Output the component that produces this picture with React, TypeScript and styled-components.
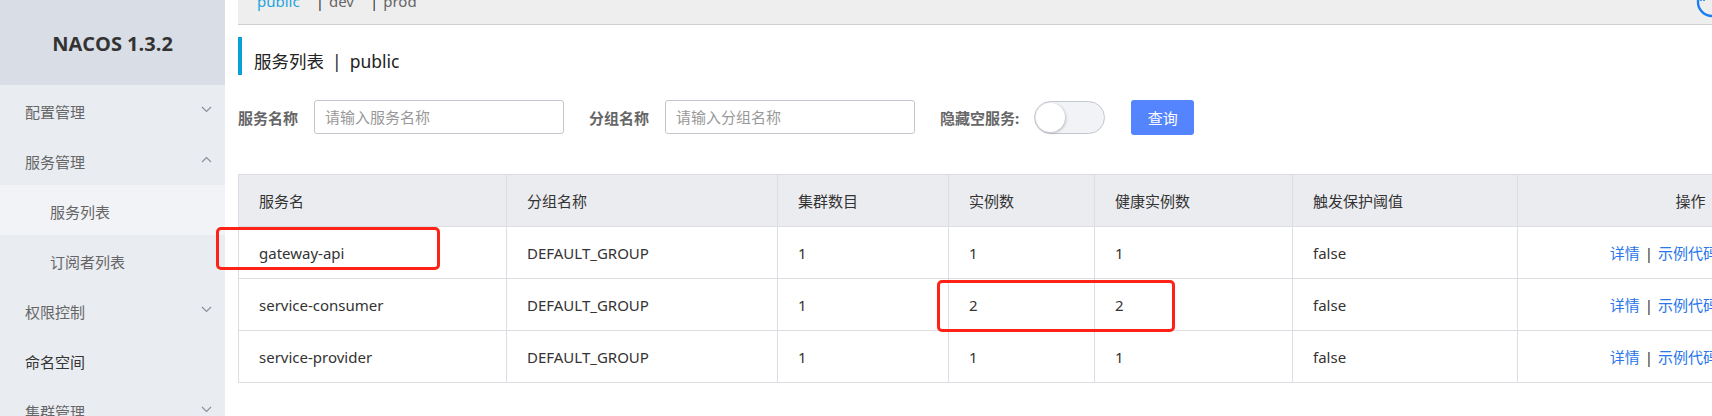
import React from 'react'
import styled, { createGlobalStyle } from 'styled-components'

const FONT = `"Noto Sans", "Noto Sans CJK SC", sans-serif`

const GlobalStyle = createGlobalStyle`
  html, body {
    margin: 0;
    padding: 0;
    background: #fff;
    overflow: hidden;
  }
  body {
    font-family: ${FONT};
    font-size: 15px;
    color: #333;
  }
`

const Page = styled.div`
  position: relative;
  display: flex;
  width: 1712px;
  height: 416px;
  overflow: hidden;
`

// ---- sidebar ----

const Sidebar = styled.aside`
  flex: 0 0 225px;
  background: #e9ecf1;
  display: flex;
  flex-direction: column;
`

const Logo = styled.div`
  height: 85px;
  flex: 0 0 85px;
  background: #d9dde5;
  display: flex;
  align-items: center;
  justify-content: center;
  font-family: "Open Sans", "Noto Sans", sans-serif;
  font-weight: 700;
  font-size: 20px;
  color: #333;
  padding-top: 1px;
  box-sizing: border-box;
`

const MenuItem = styled.div<{ $sub?: boolean; $active?: boolean; $strong?: boolean }>`
  flex: 0 0 50px;
  height: 50px;
  box-sizing: border-box;
  display: flex;
  align-items: center;
  justify-content: space-between;
  padding: 2px 13px 0 ${p => (p.$sub ? '50px' : '25px')};
  background: ${p => (p.$active ? '#f2f3f7' : 'transparent')};
  color: ${p => (p.$strong ? '#333' : '#666')};
  font-size: 15px;
`

const Chevron = ({ up }: { up?: boolean }) => (
  <svg width="11" height="7" viewBox="0 0 11 7" style={{ marginTop: '-4px' }}>
    <path
      d={up ? 'M1 6 L5.5 1.5 L10 6' : 'M1 1 L5.5 5.5 L10 1'}
      fill="none"
      stroke="#8a8e96"
      strokeWidth="1.1"
    />
  </svg>
)

// ---- main ----

const Main = styled.main`
  flex: 1;
  min-width: 0;
  padding-left: 13px;
  overflow: hidden;
`

const TopBar = styled.div`
  height: 24px;
  background: #eeeeee;
  border-bottom: 1px solid #cfcfcf;
  display: flex;
  align-items: flex-start;
  padding-left: 19px;
`

const Tabs = styled.div`
  display: flex;
  align-items: center;
  margin-top: -10px;
  line-height: 22px;
  font-size: 15px;
`

const Tab = styled.span<{ $active?: boolean }>`
  color: ${p => (p.$active ? '#1fa4e0' : '#666')};
  margin-right: 16px;
`

const TabSep = styled.span`
  color: #333;
  margin-right: 5px;
`

const HelpIcon = styled.svg`
  margin-left: auto;
  margin-top: -14px;
  margin-right: -16px;
  flex: 0 0 auto;
`

const Title = styled.h1`
  margin: 12px 0 0;
  height: 38px;
  box-sizing: border-box;
  border-left: 4px solid #08a0d6;
  padding: 10px 0 0 12px;
  line-height: 28px;
  font-size: 17.5px;
  font-weight: 400;
  color: #222;
  display: flex;
`

const TitlePart = styled.span`
  margin-right: 8px;
`

const FilterRow = styled.div`
  margin-top: 25px;
  display: flex;
  align-items: center;
  height: 34px;
`

const Label = styled.span<{ $gap: number }>`
  font-weight: 700;
  color: #666;
  font-size: 15px;
  margin-right: ${p => p.$gap}px;
  white-space: nowrap;
`

const Input = styled.input`
  width: 250px;
  height: 34px;
  box-sizing: border-box;
  border: 1px solid #c4c6cf;
  border-radius: 3px;
  padding: 0 10px;
  font-family: ${FONT};
  font-size: 15px;
  color: #333;
  margin-right: 25px;
  outline: none;
  &::placeholder {
    color: #999;
  }
`

const Switch = styled.div`
  width: 71px;
  height: 33px;
  box-sizing: border-box;
  border: 1px solid #c4c6cf;
  border-radius: 17px;
  background: #f2f3f7;
  padding: 1px;
  margin-right: 26px;
`

const Knob = styled.div`
  width: 29px;
  height: 29px;
  border-radius: 50%;
  background: #fff;
  box-shadow: 1px 1px 3px rgba(0, 0, 0, 0.22);
`

const Button = styled.button`
  width: 63px;
  height: 35px;
  border: none;
  border-radius: 3px;
  background: #5584ff;
  color: #fff;
  font-family: ${FONT};
  font-size: 15px;
  cursor: pointer;
`

const Table = styled.table`
  margin-top: 40px;
  border-collapse: collapse;
  table-layout: fixed;
  width: 1625px;
  font-size: 15px;
  color: #333;
`

const Th = styled.th<{ $center?: boolean }>`
  height: 52px;
  background: #ebecf0;
  border: 1px solid #dcdee3;
  font-weight: 400;
  text-align: ${p => (p.$center ? 'center' : 'left')};
  padding: 0 ${p => (p.$center ? '0' : '20px')};
  color: #333;
  box-sizing: border-box;
`

const Td = styled.td<{ $center?: boolean }>`
  height: 52px;
  border: 1px solid #dcdee3;
  text-align: ${p => (p.$center ? 'center' : 'left')};
  padding: 0 ${p => (p.$center ? '0' : '20px')};
  white-space: nowrap;
  box-sizing: border-box;
`

const Link = styled.a`
  color: #2a76ea;
  margin-right: 5px;
  cursor: pointer;
`

const LinkSep = styled.span`
  color: #333;
  margin-right: 5px;
`

const Mark = styled.div<{ $x: number; $y: number; $w: number; $h: number }>`
  position: absolute;
  left: ${p => p.$x}px;
  top: ${p => p.$y}px;
  width: ${p => p.$w}px;
  height: ${p => p.$h}px;
  box-sizing: border-box;
  border: 3px solid #ff2216;
  border-radius: 5px;
  pointer-events: none;
`

const columns = [
  { title: '服务名', width: 268 },
  { title: '分组名称', width: 271 },
  { title: '集群数目', width: 171 },
  { title: '实例数', width: 146 },
  { title: '健康实例数', width: 198 },
  { title: '触发保护阈值', width: 225 },
  { title: '操作', width: 346, center: true },
]

const services = [
  { name: 'gateway-api', group: 'DEFAULT_GROUP', clusters: 1, instances: 1, healthy: 1, threshold: 'false' },
  { name: 'service-consumer', group: 'DEFAULT_GROUP', clusters: 1, instances: 2, healthy: 2, threshold: 'false' },
  { name: 'service-provider', group: 'DEFAULT_GROUP', clusters: 1, instances: 1, healthy: 1, threshold: 'false' },
]

export default function App() {
  return (
    <Page>
      <GlobalStyle />
      <Sidebar>
        <Logo>NACOS 1.3.2</Logo>
        <MenuItem>
          配置管理
          <Chevron />
        </MenuItem>
        <MenuItem>
          服务管理
          <Chevron up />
        </MenuItem>
        <MenuItem $sub $active>服务列表</MenuItem>
        <MenuItem $sub>订阅者列表</MenuItem>
        <MenuItem>
          权限控制
          <Chevron />
        </MenuItem>
        <MenuItem $strong>命名空间</MenuItem>
        <MenuItem>
          集群管理
          <Chevron />
        </MenuItem>
      </Sidebar>

      <Main>
        <TopBar>
          <Tabs>
            <Tab $active>public</Tab>
            <TabSep>|</TabSep>
            <Tab>dev</Tab>
            <TabSep>|</TabSep>
            <Tab>prod</Tab>
          </Tabs>
          <HelpIcon width="32" height="32" viewBox="0 0 32 32">
            <circle cx="16" cy="16" r="14" fill="none" stroke="#1b7ff0" strokeWidth="2.4" />
            <path d="M5 9 V15 M8 9 V15 M8 9 H13 M8 12 H12" stroke="#1b7ff0" strokeWidth="1.6" fill="none" />
          </HelpIcon>
        </TopBar>

        <Title>
          <TitlePart>服务列表</TitlePart>
          <TitlePart>|</TitlePart>
          <TitlePart>public</TitlePart>
        </Title>

        <FilterRow>
          <Label $gap={16}>服务名称</Label>
          <Input placeholder="请输入服务名称" />
          <Label $gap={16}>分组名称</Label>
          <Input placeholder="请输入分组名称" />
          <Label $gap={15}>隐藏空服务:</Label>
          <Switch>
            <Knob />
          </Switch>
          <Button>查询</Button>
        </FilterRow>

        <Table>
          <colgroup>
            {columns.map(c => (
              <col key={c.title} style={{ width: c.width }} />
            ))}
          </colgroup>
          <thead>
            <tr>
              {columns.map(c => (
                <Th key={c.title} $center={c.center}>
                  {c.title}
                </Th>
              ))}
            </tr>
          </thead>
          <tbody>
            {services.map(s => (
              <tr key={s.name}>
                <Td>{s.name}</Td>
                <Td>{s.group}</Td>
                <Td>{s.clusters}</Td>
                <Td>{s.instances}</Td>
                <Td>{s.healthy}</Td>
                <Td>{s.threshold}</Td>
                <Td $center>
                  <Link>详情</Link>
                  <LinkSep>|</LinkSep>
                  <Link>示例代码</Link>
                  <LinkSep>|</LinkSep>
                  <Link>删除</Link>
                </Td>
              </tr>
            ))}
          </tbody>
        </Table>
      </Main>

      <Mark $x={216} $y={227} $w={224} $h={43} />
      <Mark $x={937} $y={280} $w={238} $h={52} />
    </Page>
  )
}
